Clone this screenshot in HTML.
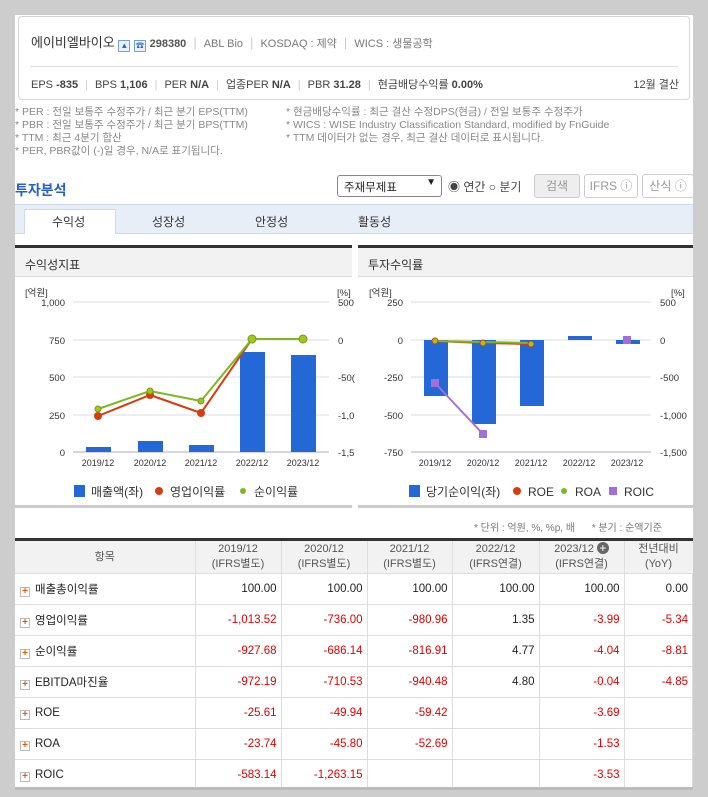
<!DOCTYPE html>
<html><head><meta charset="utf-8"><style>
*{margin:0;padding:0;box-sizing:border-box}
body{width:708px;height:797px;background:#cdcdcd;font-family:"Liberation Sans","Noto Sans CJK KR",sans-serif;font-size:11px;color:#333;position:relative;overflow:hidden}
.a{position:absolute;white-space:nowrap}
#main{position:absolute;left:15px;top:15px;width:678px;height:782px;background:#fff}
.card{position:absolute;left:18px;top:16px;width:672px;height:84px;border:1px solid #d6d6d6;border-radius:4px;background:#fff}
.sep{color:#ccc;margin:0 7px}
.note{color:#888;font-size:10.5px;line-height:13px}
.btn{position:absolute;height:24px;border:1px solid #ccc;border-radius:3px;font-size:12px;color:#999;text-align:center;line-height:22px}
.tab{position:absolute;top:213px;font-size:12px;color:#333}
.ph{position:absolute;top:245px;height:32px;background:#f2f2f2;border-top:3px solid #333;border-bottom:1px solid #ddd;font-size:12px;padding:8px 0 0 10px;color:#333}
table{position:absolute;left:15px;top:538px;width:678px;border-collapse:collapse;border-top:3px solid #333;font-size:11.5px}
td,th{border-right:1px solid #ddd;border-bottom:1px solid #ddd;height:31px;padding:0 4px}
th{background:#f2f2f2;font-weight:normal;color:#555;line-height:15px;height:34px;font-size:11px}
td{text-align:right;color:#222}
td.n{color:#d00}
td.l{text-align:left;padding-left:5px}
.pl{display:inline-block;width:10px;height:10px;border:1px solid #bbb;color:#e55a00;font-size:10px;line-height:8px;text-align:center;font-weight:bold;margin-right:5px;vertical-align:-1px}
</style></head><body>
<div id="main"></div>
<div class="card">
<div class="a" style="left:12px;top:15px;font-size:13px;color:#333">에이비엘바이오 <span style="display:inline-block;width:12px;height:12px;border:1px solid #7aa0d0;background:#e8f0fb;vertical-align:-1px;font-size:8px;color:#2468d8;text-align:center;line-height:10px">▲</span> <span style="display:inline-block;width:12px;height:12px;border:1px solid #7aa0d0;background:#e8f0fb;vertical-align:-1px;font-size:8px;color:#2468d8;text-align:center;line-height:10px">☎</span> <b style="font-size:11px;color:#555">298380</b><span class="sep">|</span><span style="font-size:11px;color:#777">ABL Bio</span><span class="sep">|</span><span style="font-size:11px;color:#777">KOSDAQ : 제약</span><span class="sep">|</span><span style="font-size:11px;color:#777">WICS : 생물공학</span></div>
<div class="a" style="left:11px;top:49px;width:648px;border-top:1px solid #ddd"></div>
<div class="a" style="left:12px;top:59px;font-size:11px;color:#444">EPS <b>-835</b><span class="sep">|</span>BPS <b>1,106</b><span class="sep">|</span>PER <b>N/A</b><span class="sep">|</span>업종PER <b>N/A</b><span class="sep">|</span>PBR <b>31.28</b><span class="sep">|</span>현금배당수익률 <b>0.00%</b></div>
<div class="a" style="right:10px;top:59px;font-size:11px;color:#444">12월 결산</div>
</div>
<div class="a note" style="left:15px;top:106px">* PER : 전일 보통주 수정주가 / 최근 분기 EPS(TTM)<br>* PBR : 전일 보통주 수정주가 / 최근 분기 BPS(TTM)<br>* TTM : 최근 4분기 합산<br>* PER, PBR값이 (-)일 경우, N/A로 표기됩니다.</div>
<div class="a note" style="left:286px;top:106px">* 현금배당수익률 : 최근 결산 수정DPS(현금) / 전일 보통주 수정주가<br>* WICS : WISE Industry Classification Standard, modified by FnGuide<br>* TTM 데이터가 없는 경우, 최근 결산 데이터로 표시됩니다.</div>
<div class="a" style="left:15px;top:180px;font-size:14px;font-weight:bold;color:#2560c8">투자분석</div>
<div class="a" style="left:337px;top:175px;width:105px;height:22px;border:1px solid #888;border-radius:3px;font-size:11.5px;padding:3px 6px;color:#222">주재무제표<span style="position:absolute;right:5px;top:1px;font-size:10px">▼</span></div>
<div class="a" style="left:448px;top:178px;font-size:12px;color:#444">◉ 연간 ○ 분기</div>
<div class="btn" style="left:534px;top:174px;width:46px;background:#eee">검색</div>
<div class="btn" style="left:584px;top:174px;width:54px">IFRS ⓘ</div>
<div class="btn" style="left:642px;top:174px;width:52px">산식 ⓘ</div>
<div class="a" style="left:15px;top:204px;width:678px;height:30px;background:#e8eef8;border-top:1px solid #cdd8e8;border-bottom:1px solid #cdd8e8"></div>
<div class="a" style="left:24px;top:209px;width:92px;height:25px;background:#fff;border:1px solid #cdd8e8;border-bottom:none"></div>
<div class="tab" style="left:52px">수익성</div><div class="tab" style="left:152px">성장성</div><div class="tab" style="left:255px">안정성</div><div class="tab" style="left:358px">활동성</div>
<div class="ph" style="left:15px;width:337px">수익성지표</div>
<div class="ph" style="left:358px;width:335px">투자수익률</div>
<div class="a" style="left:15px;top:495px;width:337px;top:595px"></div>
<div class="a" style="left:15px;top:505px;width:337px;border-top:3px solid #ccc"></div>
<div class="a" style="left:358px;top:505px;width:335px;border-top:3px solid #ccc"></div>
<svg class="a" style="left:0;top:0" width="708" height="510" font-family="Liberation Sans, Noto Sans CJK KR, sans-serif" font-size="9.5" fill="#333">
<g stroke="#ddd"><line x1="73" y1="302" x2="329" y2="302"/><line x1="73" y1="340" x2="329" y2="340"/><line x1="73" y1="377" x2="329" y2="377"/><line x1="73" y1="415" x2="329" y2="415"/></g>
<line x1="73" y1="452" x2="329" y2="452" stroke="#aac"/>
<text x="25" y="296">[억원]</text><text x="337" y="296">[%]</text>
<g text-anchor="end"><text x="65" y="306">1,000</text><text x="65" y="344">750</text><text x="65" y="381">500</text><text x="65" y="419">250</text><text x="65" y="456">0</text></g>
<text x="338" y="306">500</text><text x="338" y="344">0</text><text x="338" y="381">-50(</text><text x="338" y="419">-1,0</text><text x="338" y="456">-1,5</text>
<g fill="#2468d8"><rect x="86" y="447" width="25" height="5"/><rect x="138" y="441" width="25" height="11"/><rect x="189" y="445" width="25" height="7"/><rect x="240" y="352" width="25" height="100"/><rect x="291" y="355" width="25" height="97"/></g>
<g text-anchor="middle" font-size="9"><text x="98" y="466">2019/12</text><text x="150" y="466">2020/12</text><text x="201" y="466">2021/12</text><text x="252" y="466">2022/12</text><text x="303" y="466">2023/12</text></g>
<polyline points="98,416 150,395 201,413 252,339 303,339" fill="none" stroke="#d63c10" stroke-width="2"/>
<g fill="#d63c10"><circle cx="98" cy="416" r="4"/><circle cx="150" cy="395" r="4"/><circle cx="201" cy="413" r="4"/></g>
<polyline points="98,409 150,391 201,401 252,339 303,339" fill="none" stroke="#7cb820" stroke-width="2"/>
<g fill="#9cc820" stroke="#7a9a10"><circle cx="98" cy="409" r="3"/><circle cx="150" cy="391" r="3"/><circle cx="201" cy="401" r="3"/><circle cx="252" cy="339" r="4"/><circle cx="303" cy="339" r="4"/></g>
<g font-size="12"><rect x="74" y="485" width="11" height="12" fill="#2468d8"/><text x="91" y="496">매출액(좌)</text>
<circle cx="159" cy="491" r="4" fill="#d63c10"/><text x="170" y="496">영업이익률</text>
<circle cx="243" cy="491" r="3" fill="#7cb820"/><text x="254" y="496">순이익률</text></g>
<g stroke="#ddd"><line x1="411" y1="302" x2="651" y2="302"/><line x1="411" y1="340" x2="651" y2="340"/><line x1="411" y1="377" x2="651" y2="377"/><line x1="411" y1="415" x2="651" y2="415"/></g>
<line x1="411" y1="452" x2="651" y2="452" stroke="#aac"/>
<text x="369" y="296">[억원]</text><text x="671" y="296">[%]</text>
<g text-anchor="end"><text x="403" y="306">250</text><text x="403" y="344">0</text><text x="403" y="381">-250</text><text x="403" y="419">-500</text><text x="403" y="456">-750</text></g>
<text x="660" y="306">500</text><text x="660" y="344">0</text><text x="660" y="381">-500</text><text x="660" y="419">-1,000</text><text x="660" y="456">-1,500</text>
<g fill="#2468d8"><rect x="424" y="340" width="24" height="56"/><rect x="472" y="340" width="24" height="84"/><rect x="520" y="340" width="24" height="66"/><rect x="568" y="336" width="24" height="4"/><rect x="616" y="340" width="24" height="4"/></g>
<g text-anchor="middle" font-size="9"><text x="435" y="466">2019/12</text><text x="483" y="466">2020/12</text><text x="531" y="466">2021/12</text><text x="579" y="466">2022/12</text><text x="627" y="466">2023/12</text></g>
<polyline points="435,383 483,434" fill="none" stroke="#a070d8" stroke-width="2"/>
<g fill="#a070d8"><rect x="431" y="379" width="8" height="8"/><rect x="479" y="430" width="8" height="8"/><rect x="623" y="336" width="8" height="8"/></g>
<polyline points="435,341 483,343 531,344" fill="none" stroke="#d63c10" stroke-width="2"/>
<polyline points="435,341 483,342 531,343" fill="none" stroke="#7cb820" stroke-width="2"/>
<g fill="#9cc820" stroke="#d63c10"><circle cx="435" cy="341" r="3"/><circle cx="483" cy="343" r="3"/><circle cx="531" cy="344" r="3"/></g>
<g font-size="12"><rect x="409" y="485" width="11" height="12" fill="#2468d8"/><text x="426" y="496">당기순이익(좌)</text>
<circle cx="517" cy="491" r="4" fill="#d63c10"/><text x="528" y="496">ROE</text>
<circle cx="564" cy="491" r="3" fill="#7cb820"/><text x="575" y="496">ROA</text>
<rect x="609" y="487" width="8" height="8" fill="#a070d8"/><text x="624" y="496">ROIC</text></g>
</svg>
<div class="a" style="left:474px;top:519px;font-size:10px;color:#777">* 단위 : 억원, %, %p, 배 &nbsp;&nbsp;&nbsp;&nbsp;&nbsp;* 분기 : 순액기준</div>
<table>
<tr><th style="width:180px">항목</th><th style="width:86px">2019/12<br>(IFRS별도)</th><th style="width:86px">2020/12<br>(IFRS별도)</th><th style="width:85px">2021/12<br>(IFRS별도)</th><th style="width:87px">2022/12<br>(IFRS연결)</th><th style="width:85px">2023/12 <span style="display:inline-block;width:12px;height:12px;border-radius:6px;background:#666;color:#fff;line-height:12px;font-size:12px">+</span><br>(IFRS연결)</th><th style="border-right:none">전년대비<br>(YoY)</th></tr>
<tr><td class="l"><span class="pl">+</span>매출총이익률</td><td>100.00</td><td>100.00</td><td>100.00</td><td>100.00</td><td>100.00</td><td>0.00</td></tr>
<tr><td class="l"><span class="pl">+</span>영업이익률</td><td class="n">-1,013.52</td><td class="n">-736.00</td><td class="n">-980.96</td><td>1.35</td><td class="n">-3.99</td><td class="n">-5.34</td></tr>
<tr><td class="l"><span class="pl">+</span>순이익률</td><td class="n">-927.68</td><td class="n">-686.14</td><td class="n">-816.91</td><td>4.77</td><td class="n">-4.04</td><td class="n">-8.81</td></tr>
<tr><td class="l"><span class="pl">+</span>EBITDA마진율</td><td class="n">-972.19</td><td class="n">-710.53</td><td class="n">-940.48</td><td>4.80</td><td class="n">-0.04</td><td class="n">-4.85</td></tr>
<tr><td class="l"><span class="pl">+</span>ROE</td><td class="n">-25.61</td><td class="n">-49.94</td><td class="n">-59.42</td><td></td><td class="n">-3.69</td><td></td></tr>
<tr><td class="l"><span class="pl">+</span>ROA</td><td class="n">-23.74</td><td class="n">-45.80</td><td class="n">-52.69</td><td></td><td class="n">-1.53</td><td></td></tr>
<tr><td class="l"><span class="pl">+</span>ROIC</td><td class="n">-583.14</td><td class="n">-1,263.15</td><td></td><td></td><td class="n">-3.53</td><td></td></tr>
</table>
<div class="a" style="left:15px;top:787px;width:678px;height:10px;background:#cdcdcd;border-top:3px solid #bbb"></div>
</body></html>
